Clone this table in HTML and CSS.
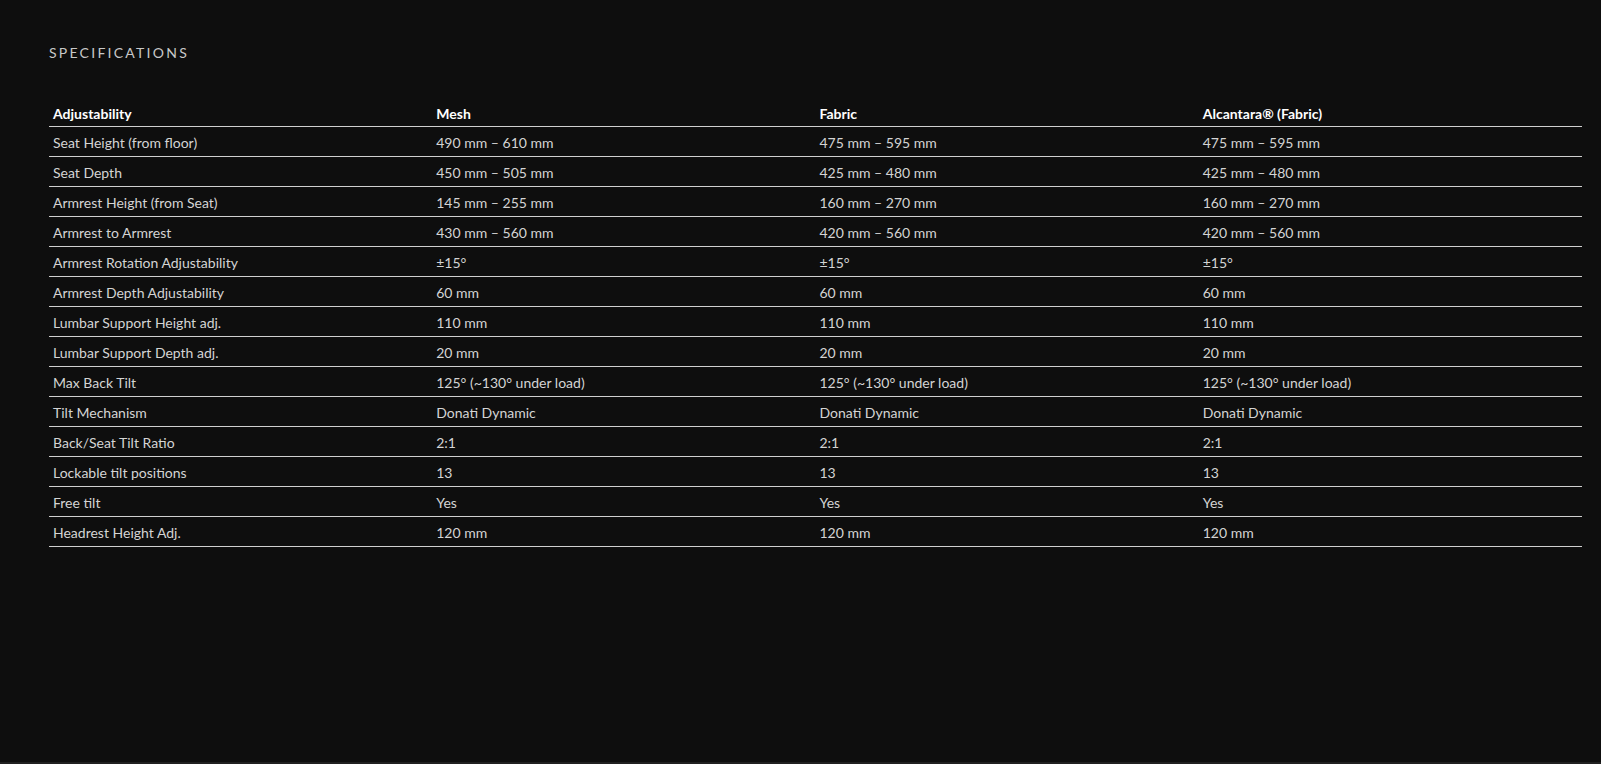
FILE: index.html
```html
<!DOCTYPE html>
<html lang="en">
<head>
<meta charset="utf-8">
<title>Specifications</title>
<link rel="stylesheet" href="styles.css">
</head>
<body>
<div class="page">
  <main class="specs">
    <h2 class="specs-title">SPECIFICATIONS</h2>
    <table class="spec-table">
      <thead>
        <tr><th>Adjustability</th><th>Mesh</th><th>Fabric</th><th>Alcantara® (Fabric)</th></tr>
      </thead>
      <tbody>
        <tr><td>Seat Height (from floor)</td><td>490 mm – 610 mm</td><td>475 mm – 595 mm</td><td>475 mm – 595 mm</td></tr>
        <tr><td>Seat Depth</td><td>450 mm – 505 mm</td><td>425 mm – 480 mm</td><td>425 mm – 480 mm</td></tr>
        <tr><td>Armrest Height (from Seat)</td><td>145 mm – 255 mm</td><td>160 mm – 270 mm</td><td>160 mm – 270 mm</td></tr>
        <tr><td>Armrest to Armrest</td><td>430 mm – 560 mm</td><td>420 mm – 560 mm</td><td>420 mm – 560 mm</td></tr>
        <tr><td>Armrest Rotation Adjustability</td><td>±15°</td><td>±15°</td><td>±15°</td></tr>
        <tr><td>Armrest Depth Adjustability</td><td>60 mm</td><td>60 mm</td><td>60 mm</td></tr>
        <tr><td>Lumbar Support Height adj.</td><td>110 mm</td><td>110 mm</td><td>110 mm</td></tr>
        <tr><td>Lumbar Support Depth adj.</td><td>20 mm</td><td>20 mm</td><td>20 mm</td></tr>
        <tr><td>Max Back Tilt</td><td>125° (~130° under load)</td><td>125° (~130° under load)</td><td>125° (~130° under load)</td></tr>
        <tr><td>Tilt Mechanism</td><td>Donati Dynamic</td><td>Donati Dynamic</td><td>Donati Dynamic</td></tr>
        <tr><td>Back/Seat Tilt Ratio</td><td>2:1</td><td>2:1</td><td>2:1</td></tr>
        <tr><td>Lockable tilt positions</td><td>13</td><td>13</td><td>13</td></tr>
        <tr><td>Free tilt</td><td>Yes</td><td>Yes</td><td>Yes</td></tr>
        <tr><td>Headrest Height Adj.</td><td>120 mm</td><td>120 mm</td><td>120 mm</td></tr>
      </tbody>
    </table>
  </main>
  <div class="bottom-strip"></div>
</div>
</body>
</html>
```

FILE: styles.css
```css
html, body {
  margin: 0;
  padding: 0;
  height: 100%;
}

body {
  background: #0e0e0e;
  color: #d8d8d8;
  font-family: "Lato", "Liberation Sans", sans-serif;
  font-size: 14px;
}

.page {
  display: flex;
  flex-direction: column;
  min-height: 100%;
}

.specs {
  flex: 1;
  padding: 43px 19px 0 49px;
}

.specs-title {
  margin: 0 0 34px;
  font-size: 14px;
  font-weight: 400;
  letter-spacing: 2.25px;
  line-height: 20px;
  color: #c8c8c8;
}

.spec-table {
  width: 100%;
  border-collapse: collapse;
  table-layout: fixed;
}

.spec-table th,
.spec-table td {
  text-align: left;
  padding: 2px 4px 0;
  height: 27px;
  line-height: 20px;
  vertical-align: middle;
  border-bottom: 1px solid #cfcfcf;
  white-space: nowrap;
}

.spec-table th {
  height: 25px;
  padding-top: 4px;
  color: #ffffff;
  font-weight: 700;
}

.spec-table td {
  color: #d4d4d4;
}

.bottom-strip {
  height: 2px;
  background: #202020;
}
```
